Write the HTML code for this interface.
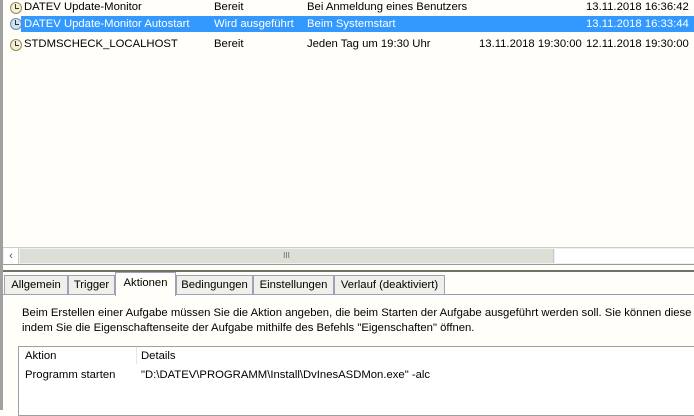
<!DOCTYPE html>
<html><head><meta charset="utf-8"><style>
*{margin:0;padding:0;box-sizing:border-box}
body{width:694px;height:410px;overflow:hidden;background:#fffef8;font-family:"Liberation Sans",sans-serif;font-size:11.3px;color:#000;position:relative}
.a{position:absolute;white-space:nowrap}
.strip{position:absolute;left:0;top:0;width:3px;height:410px;background:#a0a0a0}
.row{position:absolute;left:3px;width:691px;height:16px}
.sel{background:#3399ff;color:#fff}
.clk{position:absolute;left:7px;top:2px;width:12px;height:12px;border-radius:50%;border:1px solid #9a8a50;background:#f3eed8}
.clk:after{content:"";position:absolute;left:4px;top:1px;width:3px;height:4px;border-left:1px solid #333;border-bottom:1px solid #333}
.tab{position:absolute;top:275px;height:20px;border:1px solid #a0a0b8;background:#f0f0ea;text-align:center;line-height:18px}
</style></head><body>
<div class="strip"></div>
<div class="row" style="top:0"><div class="clk"></div><span class="a" style="left:21px;top:1px">DATEV Update-Monitor</span><span class="a" style="left:211px;top:1px">Bereit</span><span class="a" style="left:304px;top:1px">Bei Anmeldung eines Benutzers</span><span class="a" style="left:583px;top:1px">13.11.2018 16:36:42</span></div>
<div class="row sel" style="top:16px;left:21px;width:673px"></div>
<div class="row" style="top:16px;color:#fff"><div class="clk" style="background:#cfe0f0;border-color:#6a8ab0"></div><span class="a" style="left:21px;top:2px">DATEV Update-Monitor Autostart</span><span class="a" style="left:211px;top:2px">Wird ausgeführt</span><span class="a" style="left:304px;top:2px">Beim Systemstart</span><span class="a" style="left:583px;top:2px">13.11.2018 16:33:44</span></div>
<div class="row" style="top:37px"><div class="clk"></div><span class="a" style="left:21px;top:1px">STDMSCHECK_LOCALHOST</span><span class="a" style="left:211px;top:1px">Bereit</span><span class="a" style="left:304px;top:1px">Jeden Tag um 19:30 Uhr</span><span class="a" style="left:476px;top:1px">13.11.2018 19:30:00</span><span class="a" style="left:583px;top:1px">12.11.2018 19:30:00</span></div>
<div class="a" style="left:3px;top:247px;width:691px;height:18px;background:#f0f0f0;border-top:1px solid #ccc;border-bottom:1px solid #999"></div>
<div class="a" style="left:4px;top:248px;width:15px;height:16px;background:#fff;border-right:1px solid #ccc;text-align:center;line-height:16px;color:#555">&lsaquo;</div>
<div class="a" style="left:20px;top:249px;width:534px;height:14px;background:#dcdfd6;border-right:1px solid #c8c8c8;text-align:center;line-height:13px;font-size:8px;color:#666">III</div>
<div class="a" style="left:555px;top:249px;width:139px;height:14px;background:#fff"></div>
<div class="a" style="left:3px;top:270px;width:691px;height:2px;background:#707468"></div>
<div class="a" style="left:3px;top:294px;width:691px;height:1px;background:#9a9ab8"></div>
<div class="tab" style="left:4px;width:64px">Allgemein</div>
<div class="tab" style="left:68px;width:47px">Trigger</div>
<div class="tab" style="left:115px;width:61px;top:272px;height:24px;background:#fffef8;border-bottom:none;line-height:21px">Aktionen</div>
<div class="tab" style="left:176px;width:77px">Bedingungen</div>
<div class="tab" style="left:253px;width:81px">Einstellungen</div>
<div class="tab" style="left:334px;width:111px">Verlauf (deaktiviert)</div>
<span class="a" style="left:22px;top:307px">Beim Erstellen einer Aufgabe müssen Sie die Aktion angeben, die beim Starten der Aufgabe ausgeführt werden soll. Sie können diese</span>
<span class="a" style="left:22px;top:322px">indem Sie die Eigenschaftenseite der Aufgabe mithilfe des Befehls "Eigenschaften" öffnen.</span>
<div class="a" style="left:18px;top:346px;width:680px;height:70px;border:1px solid #a0a0a0;background:#fff"></div>
<div class="a" style="left:136px;top:347px;width:1px;height:17px;background:#e5e5e5"></div>
<span class="a" style="left:25px;top:350px">Aktion</span>
<span class="a" style="left:141px;top:350px">Details</span>
<span class="a" style="left:25px;top:369px">Programm starten</span>
<span class="a" style="left:141px;top:369px">"D:\DATEV\PROGRAMM\Install\DvInesASDMon.exe" -alc</span>
</body></html>
